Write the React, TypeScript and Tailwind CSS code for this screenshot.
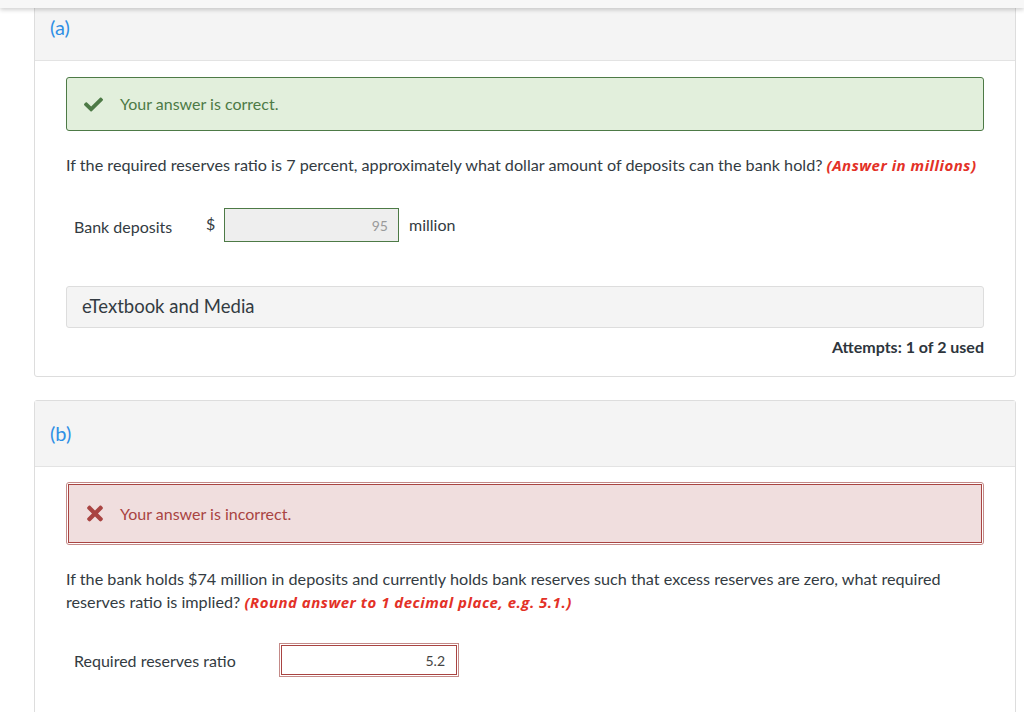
import { FaCheck, FaTimes } from "react-icons/fa";

const font = { fontFamily: "Lato, 'Noto Sans', sans-serif" };
const hint = { fontFamily: "'Open Sans', sans-serif" };

export default function App() {
  return (
    <div className="w-[1024px] h-[712px] overflow-hidden bg-white text-[#333b42]" style={font}>
      <div className="relative z-10 h-[8px] bg-[#f7f7f7] shadow-[0_2px_4px_rgba(0,0,0,0.18)]" />

      <div className="pl-[34px] pr-[8px]">
        {/* part (a) */}
        <div className="-mt-[1px] border border-[#dddddd] rounded-b-[3px]">
          <div className="h-[53px] bg-[#f4f4f4] border-b border-[#e3e3e3] pl-[15px] pt-[4px] text-[20px] text-[#2f8fe5]">
            (a)
          </div>
          <div className="px-[31px] pt-[16px] pb-[17px]">
            <div className="h-[54px] flex items-center bg-[#e2efdc] border border-[#4d7a46] rounded-[3px] text-[#4d7a46]">
              <FaCheck className="ml-[17px] w-[19px] h-[19px]" />
              <span className="ml-[17px] text-[16px]">Your answer is correct.</span>
            </div>

            <p className="mt-[23px] text-[16.2px] leading-[22px]">
              If the required reserves ratio is 7 percent, approximately what dollar amount of deposits can the bank hold?{" "}
              <span className="font-bold italic text-[#e33127] text-[15px] tracking-[0.5px]" style={hint}>
                (Answer in millions)
              </span>
            </p>

            <div className="mt-[32px] flex items-center text-[16px]">
              <span className="ml-[8px] w-[132px] mt-[3px]">Bank deposits</span>
              <span className="w-[18px] mb-[2px]">$</span>
              <div className="w-[175px] h-[34px] bg-[#eeeeee] border border-[#4d7a46] flex items-center justify-end pr-[10px] text-[14px] text-[#9a9a9a]">
                95
              </div>
              <span className="ml-[10px]">million</span>
            </div>

            <div className="mt-[44px] h-[42px] bg-[#f4f4f4] border border-[#dddddd] rounded-[3px] flex items-center pl-[15px] text-[18.5px]">
              eTextbook and Media
            </div>

            <div className="mt-[7px] text-right font-bold text-[16px] text-[#2d353c]">Attempts: 1 of 2 used</div>
          </div>
        </div>

        {/* part (b) */}
        <div className="mt-[23px] border border-[#dddddd] rounded-t-[3px]">
          <div className="h-[66px] bg-[#f4f4f4] border-b border-[#e3e3e3] pl-[15px] pt-[17px] text-[20px] text-[#2f8fe5]">
            (b)
          </div>
          <div className="px-[31px] pt-[15px] pb-[40px]">
            <div className="border border-[#c48a88] rounded-[3px] p-[1px]">
              <div className="h-[59px] flex items-center bg-[#f0dede] border border-[#a94442] text-[#a94442]">
                <FaTimes className="ml-[18px] w-[16px] h-[23px]" />
                <span className="ml-[17px] text-[16px]">Your answer is incorrect.</span>
              </div>
            </div>

            <p className="mt-[22px] text-[16.2px] leading-[23px]">
              If the bank holds $74 million in deposits and currently holds bank reserves such that excess reserves are zero, what required reserves ratio is implied?{" "}
              <span className="font-bold italic text-[#e33127] text-[15px] tracking-[0.5px]" style={hint}>
                (Round answer to 1 decimal place, e.g. 5.1.)
              </span>
            </p>

            <div className="mt-[29px] flex items-center text-[16px]">
              <span className="ml-[8px] w-[205px] mt-[2px]">Required reserves ratio</span>
              <div className="w-[180px] h-[34px] border border-[#c48a88] p-[1px]">
                <div className="h-full border border-[#a94442] bg-white flex items-center justify-end pr-[11px] text-[14px] text-[#444]">
                  5.2
                </div>
              </div>
            </div>
          </div>
        </div>
      </div>
    </div>
  );
}
